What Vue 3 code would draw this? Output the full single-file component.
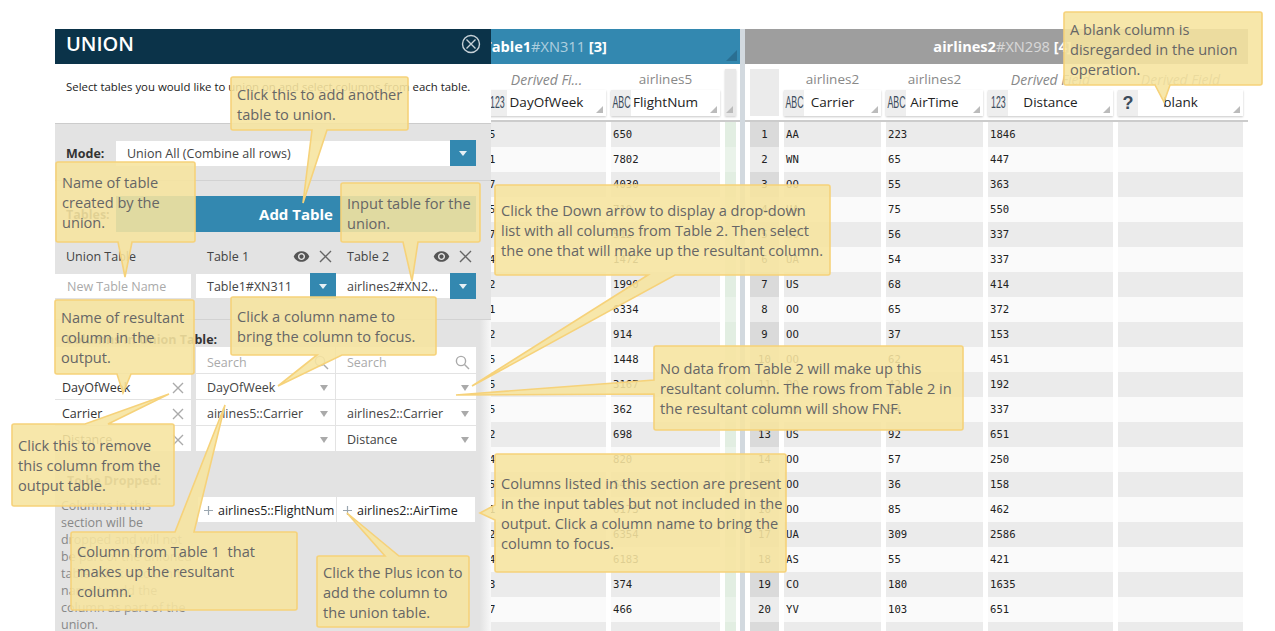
<template>
<div class="page">
    <div class="workspace">
        <section class="table left-table">
            <header class="table-title blue">
                <span class="t-name">Table1</span><span class="t-id">#XN311</span> <span class="t-count">[3]</span>
                <i class="corner"></i>
            </header>
            <div class="columns">
                <div v-for="col in leftCols" :key="col.name" class="col" :class="col.kind">
                    <div class="col-head">
                        <div class="col-source" :class="{ derived: col.derived }">{{ col.source }}</div>
                        <div class="col-name">
                            <span class="type-icon" :class="{ unknown: col.type === '?' }"><b>{{ col.type }}</b></span>
                            <span class="name-text">{{ col.name }}</span>
                            <i class="resize"></i>
                        </div>
                    </div>
                    <div class="cells">
                        <div v-for="(v, i) in col.values" :key="i" class="cell">{{ v }}</div>
                    </div>
                </div>
                <div class="col narrow">
                    <div class="col-head"><i class="resize"></i></div>
                    <div class="cells">
                        <div v-for="n in 21" :key="n" class="cell"></div>
                    </div>
                </div>
            </div>
        </section>

        <div class="split"></div>

        <section class="table right-table">
            <header class="table-title grey">
                <span class="t-name">airlines2</span><span class="t-id">#XN298</span> <span class="t-count">[4]</span>
            </header>
            <div class="columns">
                <div class="col rownum">
                    <div class="col-head"></div>
                    <div class="cells">
                        <div v-for="n in 21" :key="n" class="cell">{{ n < 21 ? n : '' }}</div>
                    </div>
                </div>
                <div v-for="col in rightCols" :key="col.name" class="col" :class="col.kind">
                    <div class="col-head">
                        <div class="col-source" :class="{ derived: col.derived }">{{ col.source }}</div>
                        <div class="col-name">
                            <span class="type-icon" :class="{ unknown: col.type === '?' }"><b>{{ col.type }}</b></span>
                            <span class="name-text">{{ col.name }}</span>
                            <i class="resize"></i>
                        </div>
                    </div>
                    <div class="cells">
                        <div v-for="(v, i) in col.values" :key="i" class="cell">{{ v }}</div>
                    </div>
                </div>
            </div>
        </section>
    </div>

    <aside class="panel">
        <div class="panel-head">
            <h1>UNION</h1>
            <svg class="close" width="20" height="20" viewBox="0 0 20 20">
                <circle cx="10" cy="10" r="8.5" />
                <path d="M5.5 5.5l9 9M14.5 5.5l-9 9" />
            </svg>
        </div>
        <div class="intro">Select tables you would like to union on and select columns from each table.</div>

        <div class="mode-row">
            <label>Mode:</label>
            <div class="select">
                <span>Union All (Combine all rows)</span>
                <button class="drop"><i></i></button>
            </div>
        </div>

        <div class="tables-sec">
            <div class="tables-row">
                <label>Tables:</label>
                <button class="add-table">Add Table</button>
            </div>
            <div class="tgrid heads">
                <div class="c0 th">Union Table</div>
                <div v-for="n in 2" :key="n" class="th">
                    <span>Table {{ n }}</span>
                    <svg class="eye" width="17" height="17" viewBox="0 0 24 24"><path d="M12 4.5C7 4.5 2.73 7.61 1 12c1.73 4.39 6 7.5 11 7.5s9.27-3.11 11-7.5c-1.73-4.39-6-7.5-11-7.5zM12 17c-2.76 0-5-2.24-5-5s2.24-5 5-5 5 2.24 5 5-2.24 5-5 5zm0-8c-1.66 0-3 1.34-3 3s1.34 3 3 3 3-1.34 3-3-1.34-3-3-3z" /></svg>
                    <svg class="x dark" width="13" height="13" viewBox="0 0 13 13"><path d="M1 1l11 11M12 1L1 12" /></svg>
                </div>
            </div>
            <div class="tgrid inputs">
                <div class="c0 input placeholder">New Table Name</div>
                <div class="input-sel"><span>Table1#XN311</span><button class="drop"><i></i></button></div>
                <div class="input-sel"><span>airlines2#XN2...</span><button class="drop"><i></i></button></div>
            </div>
        </div>

        <div class="columns-sec">
            <div class="sec-label">Columns in Union Table:</div>
            <div class="tgrid colgrid">
                <div class="c0 blank-cell"></div>
                <div class="cell-w search"><span>Search</span><svg width="15" height="15" viewBox="0 0 15 15"><circle cx="6" cy="6" r="4.6" /><path d="M9.5 9.5l4.5 4.5" /></svg></div>
                <div class="cell-w search"><span>Search</span><svg width="15" height="15" viewBox="0 0 15 15"><circle cx="6" cy="6" r="4.6" /><path d="M9.5 9.5l4.5 4.5" /></svg></div>
                <template v-for="row in unionRows" :key="row[0]">
                    <div class="c0 cell-w out">
                        <span>{{ row[0] }}</span>
                        <svg class="x" width="12" height="12" viewBox="0 0 12 12"><path d="M1 1l10 10M11 1L1 11" /></svg>
                    </div>
                    <div class="cell-w pick"><span>{{ row[1] }}</span><i></i></div>
                    <div class="cell-w pick"><span>{{ row[2] }}</span><i></i></div>
                </template>
            </div>
        </div>

        <div class="dropped-sec">
            <div class="dropped-text">
                <div class="sec-label">To be Dropped:</div>
                <p>Columns in this<br>section will be<br>dropped and will not<br>be part of the unioned<br>table. Click a column<br>name to add the<br>column as part of the<br>union.</p>
            </div>
            <div class="chips">
                <div v-for="c in droppedCols" :key="c" class="chip">
                    <svg width="11" height="11" viewBox="0 0 11 11"><path d="M5.5 1v9M1 5.5h9" /></svg>
                    <span>{{ c }}</span>
                </div>
            </div>
        </div>
    </aside>

    <div v-for="tip in callouts" :key="tip.id" class="callout" :style="tip.style">
        <svg :width="tip.w" :height="tip.h"><path :d="tip.path" /></svg>
        <p><span v-for="line in tip.lines" :key="line">{{ line }}</span></p>
    </div>
</div>
</template>

<script setup>
const firstVals = [5, 1, 7, 5, 7, 4, 2, 1, 2, 5, 5, 5, 2, 4, 5, 1, 2, 4, 3, 7, '']

const leftCols = [
    { name: 'DayOfWeek', source: 'Derived Fi...', derived: true, type: '123', kind: 'w119', values: firstVals },
    {
        name: 'FlightNum', source: 'airlines5', type: 'ABC', kind: 'w109',
        values: [650, 7802, 4030, 710, 512, 1472, 1990, 6334, 914, 1448, 3167, 362, 698, 820, 547, 6173, 6354, 6183, 374, 466, '']
    }
]

const rightCols = [
    {
        name: 'Carrier', source: 'airlines2', type: 'ABC', kind: 'w97',
        values: ['AA', 'WN', 'OO', 'UA', 'OO', 'UA', 'US', 'OO', 'OO', 'OO', 'OO', 'OO', 'US', 'OO', 'OO', 'OO', 'UA', 'AS', 'CO', 'YV', '']
    },
    {
        name: 'AirTime', source: 'airlines2', type: 'ABC', kind: 'w97',
        values: [223, 65, 55, 75, 56, 54, 68, 65, 37, 62, 42, 54, 92, 57, 36, 85, 309, 55, 180, 103, '']
    },
    {
        name: 'Distance', source: 'Derived Field', derived: true, type: '123', kind: 'w125',
        values: [1846, 447, 363, 550, 337, 337, 414, 372, 153, 451, 192, 337, 651, 250, 158, 462, 2586, 421, 1635, 651, '']
    },
    {
        name: 'blank', source: 'Derived Field', derived: true, type: '?', kind: 'w125',
        values: Array(21).fill('')
    }
]

const unionRows = [
    ['DayOfWeek', 'DayOfWeek', ''],
    ['Carrier', 'airlines5::Carrier', 'airlines2::Carrier'],
    ['Distance', '', 'Distance']
]

const droppedCols = ['airlines5::FlightNum', 'airlines2::AirTime']

// boxes and tail tips are page coordinates read off the screenshot
const rawCallouts = [
    { id: 'remove', box: [11, 423, 175, 507], side: 'top', a: 85, b: 108, tip: [169, 394], lines: ['Click this to remove', 'this column from the', 'output table.'] },
    { id: 'resultant', box: [54, 299, 195, 375], side: 'bottom', a: 117, b: 131, tip: [123, 393], lines: ['Name of resultant', 'column in the', 'output.'] },
    { id: 'name', box: [55, 161, 196, 243], side: 'bottom', a: 118, b: 132, tip: [125, 277], lines: ['Name of table', 'created by the', 'union.'] },
    { id: 'add', box: [230, 76, 409, 131], side: 'bottom', a: 312, b: 327, tip: [303, 203], lines: ['Click this to add another', 'table to union.'] },
    { id: 'input', box: [340, 182, 481, 243], side: 'bottom', a: 403, b: 418, tip: [412, 281], lines: ['Input table for the', 'union.'] },
    { id: 'focus', box: [230, 296, 437, 356], side: 'bottom', a: 317, b: 342, tip: [278, 386], lines: ['Click a column name to', 'bring the column to focus.'] },
    { id: 'down', box: [494, 184, 831, 276], side: 'bottom', a: 648, b: 675, tip: [472, 386], lines: ['Click the Down arrow to display a drop-down', 'list with all columns from Table 2. Then select', 'the one that will make up the resultant column.'] },
    { id: 'nodata', box: [653, 345, 964, 431], side: 'left', a: 380, b: 394, tip: [456, 395], lines: ['No data from Table 2 will make up this', 'resultant column. The rows from Table 2 in', 'the resultant column will show FNF.'] },
    { id: 'from1', box: [70, 531, 298, 611], side: 'top', a: 175, b: 194, tip: [225, 405], lines: ['Column from Table 1  that', 'makes up the resultant', 'column.'] },
    { id: 'listed', box: [494, 453, 787, 573], side: 'left', a: 505, b: 520, tip: [480, 513], lines: ['Columns listed in this section are present', 'in the input tables but not included in the', 'output. Click a column name to bring the', 'column to focus.'] },
    { id: 'plus', box: [316, 555, 470, 628], side: 'top', a: 385, b: 399, tip: [347, 513], lines: ['Click the Plus icon to', 'add the column to', 'the union table.'] },
    { id: 'blank', box: [1063, 11, 1263, 86], side: 'bottom', a: 1155, b: 1170, tip: [1164, 102], lines: ['A blank column is', 'disregarded in the union', 'operation.'] }
]

const calloutPath = (w, h, c) => {
    const [l, t] = c.box
    const r = w - 1
    const b = h - 1
    const tx = c.tip[0] - l
    const ty = c.tip[1] - t
    const top = c.side === 'top' ? `L${c.a - l} 1L${tx} ${ty}L${c.b - l} 1` : ''
    const bottom = c.side === 'bottom' ? `L${c.b - l} ${b}L${tx} ${ty}L${c.a - l} ${b}` : ''
    const left = c.side === 'left' ? `L1 ${c.b - t}L${tx} ${ty}L1 ${c.a - t}` : ''
    return `M3 1${top}L${r - 2} 1Q${r} 1 ${r} 3L${r} ${b - 2}Q${r} ${b} ${r - 2} ${b}${bottom}L3 ${b}Q1 ${b} 1 ${b - 2}${left}L1 3Q1 1 3 1Z`
}

const callouts = rawCallouts.map((c) => {
    const w = c.box[2] - c.box[0]
    const h = c.box[3] - c.box[1]
    return {
        id: c.id,
        lines: c.lines,
        w,
        h,
        path: calloutPath(w, h, c),
        style: { left: `${c.box[0]}px`, top: `${c.box[1]}px`, width: `${w}px`, height: `${h}px` }
    }
})
</script>

<style scoped>
.page {
    position: relative;
    width: 1275px;
    height: 631px;
    overflow: hidden;
    background: #fff;
    font-family: "Open Sans", sans-serif;
    color: #333;
}

.workspace {
    display: flex;
    padding: 29px 0 0 350px;
    height: 602px;
}

.table {
    display: flex;
    flex-direction: column;
    overflow: hidden;
}

.left-table {
    width: 390px;
}

.right-table {
    width: 503px;
}

.split {
    width: 5px;
    background: #d2d9df;
}

.table-title {
    position: relative;
    height: 35px;
    line-height: 35px;
    text-align: center;
    font-size: 14.6px;
    color: #fff;
    flex: none;
}

.table-title.blue {
    background: #3388b0;
}

.table-title.grey {
    padding-left: 12px;
    background: #9e9e9e;
}

.t-name,
.t-count {
    font-weight: 700;
}

.t-id {
    opacity: 0.6;
}

.corner {
    position: absolute;
    right: 3px;
    bottom: 3px;
    border-style: solid;
    border-width: 0 0 11px 11px;
    border-color: transparent transparent #2a6f92 transparent;
}

.columns {
    display: flex;
    gap: 5px;
    flex: 1;
    padding: 0 5px;
    min-height: 0;
    background: linear-gradient(#ccc, #ccc) 0 56px / 100% 2px no-repeat;
}

.left-table .columns {
    justify-content: flex-end;
    padding-right: 4.5px;
}

.col {
    flex: none;
}

.w119 { width: 119px; }
.w109 { width: 109px; }
.w97 { width: 97px; }
.w125 { width: 125px; }

.col-head {
    position: relative;
    height: 58px;
    padding-top: 5px;
    box-sizing: border-box;
}

.col-source {
    height: 21px;
    line-height: 21px;
    font-size: 13.5px;
    text-align: center;
    color: #888;
    background: #fff;
    border-radius: 2px 2px 0 0;
}

.col-source.derived {
    font-size: 14px;
    font-style: italic;
}

.col-name {
    position: relative;
    display: flex;
    align-items: center;
    height: 26px;
    background: #fff;
    box-shadow: 0 1px 2px rgba(0, 0, 0, 0.22);
}

.type-icon {
    display: flex;
    align-items: center;
    justify-content: center;
    flex: none;
    width: 20px;
    height: 26px;
    background: #eee;
    font-family: "Liberation Sans", sans-serif;
    font-size: 16px;
    color: #3c4c5c;
}

.type-icon b {
    font-weight: 400;
    transform: scaleX(0.55);
}

.type-icon.unknown b {
    font-weight: 700;
    font-size: 18px;
    transform: none;
}

.name-text {
    flex: 1;
    padding: 0 20px 2px 0;
    text-align: center;
    font-size: 13.5px;
    color: #222;
    white-space: nowrap;
}

.resize {
    position: absolute;
    right: 3px;
    bottom: 3px;
    border-style: solid;
    border-width: 0 0 7px 7px;
    border-color: transparent transparent #bbb transparent;
}

.cell {
    height: 25px;
    line-height: 25px;
    padding-left: 2px;
    font-family: "DejaVu Sans Mono", monospace;
    font-size: 10.6px;
    color: #222;
    background: #fafafa;
}

.cell:nth-child(odd) {
    background: #ebebeb;
}

.narrow {
    width: 10.5px;
}

.narrow .col-head {
    height: 47px;
    margin: 5px 0 6px;
    padding: 0;
    background: #e8e8e8;
    box-shadow: 0 1px 2px rgba(0, 0, 0, 0.2);
}

.narrow .cell {
    background: #eaf3ea;
}

.narrow .cell:nth-child(odd) {
    background: #e2eee2;
}

.rownum {
    width: 29px;
}

.rownum .col-head {
    height: 47px;
    margin: 5px 0 6px;
    padding: 0;
    background: #ebebeb;
}

.rownum .cell {
    padding: 0;
    text-align: center;
    background: #ececec;
}

.rownum .cell:nth-child(odd) {
    background: #dadada;
}

.panel {
    position: absolute;
    left: 55px;
    top: 29px;
    bottom: 0;
    width: 436px;
    display: flex;
    flex-direction: column;
    background: #e3e3e3;
    font-size: 12.5px;
}

.panel > * {
    flex: none;
}

.panel-head {
    display: flex;
    justify-content: space-between;
    align-items: center;
    height: 35px;
    padding: 0 10px 5px 11px;
    box-sizing: border-box;
    background: #0b3349;
}

.panel-head h1 {
    margin: 0;
    font-size: 20px;
    font-weight: 600;
    line-height: 26px;
    color: #fff;
}

.close {
    fill: none;
    stroke: #c8d2d8;
    stroke-width: 1.4;
}

.intro {
    height: 60px;
    padding: 15px 11px 0;
    box-sizing: border-box;
    background: #fff;
    border-bottom: 1px solid #ccc;
    font-size: 11.4px;
    line-height: 16px;
    color: #222;
    white-space: nowrap;
}

.mode-row {
    display: flex;
    align-items: center;
    height: 57px;
    padding: 2px 15px 0 11px;
    box-sizing: border-box;
    border-bottom: 1px solid #d2d2d2;
}

.mode-row label,
.tables-row label {
    width: 50px;
    flex: none;
    font-size: 12.5px;
    font-weight: 700;
    color: #333;
}

.select {
    flex: 1;
    display: flex;
    align-items: center;
    justify-content: space-between;
    height: 25px;
    padding-left: 11px;
    background: #fff;
    font-size: 12.5px;
    color: #444;
}

.drop {
    flex: none;
    display: flex;
    align-items: center;
    justify-content: center;
    width: 26px;
    height: 26px;
    padding: 0;
    border: none;
    background: #3388b0;
}

.drop i {
    border-style: solid;
    border-width: 5px 4.5px 0;
    border-color: #e6f0f5 transparent transparent;
}

.tables-sec {
    height: 139px;
    padding-top: 15px;
    box-sizing: border-box;
    border-bottom: 1px solid #d2d2d2;
}

.tables-row {
    display: flex;
    align-items: center;
    padding: 0 15px 0 11px;
}

.add-table {
    flex: 1;
    height: 36px;
    border: none;
    background: #3388b0;
    color: #fff;
    font-family: inherit;
    font-size: 15px;
    font-weight: 700;
}

.tgrid {
    display: grid;
    grid-template-columns: 141px 140px 140px;
}

.c0 {
    margin-right: 5px;
}

.heads {
    height: 41px;
    align-items: center;
    padding-top: 8px;
    box-sizing: border-box;
}

.th {
    display: flex;
    align-items: center;
    padding: 0 4px 0 11px;
    font-size: 12.5px;
    color: #444;
}

.th span {
    flex: 1;
}

.eye {
    fill: #555;
    margin-right: 9px;
}

.x {
    fill: none;
    stroke: #aaa;
    stroke-width: 1.4;
    flex: none;
}

.x.dark {
    stroke: #666;
}

.inputs {
    align-items: center;
    height: 26px;
}

.input {
    height: 24px;
    line-height: 26px;
    padding-left: 12px;
    background: #fff;
    font-size: 12.5px;
}

.placeholder {
    color: #aaa;
}

.input-sel {
    display: flex;
    align-items: center;
    justify-content: space-between;
    height: 24px;
    padding-left: 11px;
    background: #fff;
    font-size: 12.5px;
    color: #444;
}

.input-sel span {
    padding-top: 1px;
}

.columns-sec {
    height: 132px;
    padding-top: 13px;
    box-sizing: border-box;
    background: linear-gradient(to right, #e3e3e3 425px, #f8f8f8);
}

.sec-label {
    padding-left: 11px;
    height: 14px;
    line-height: 14px;
    font-size: 12.5px;
    font-weight: 700;
    color: #333;
}

.colgrid {
    grid-template-rows: 26px;
    grid-auto-rows: 25px;
    row-gap: 1px;
    width: 421px;
}

.blank-cell {
    background: #fff;
}

.cell-w {
    display: flex;
    align-items: center;
    justify-content: space-between;
    padding: 2px 6px 0 11px;
    background: #fff;
    border-right: 1px solid #e3e3e3;
    font-size: 12.5px;
    color: #444;
    box-sizing: border-box;
}

.cell-w:nth-child(3n) {
    border-right: none;
}

.search {
    padding-top: 4px;
    color: #aaa;
}

.search svg {
    fill: none;
    stroke: #aaa;
    stroke-width: 1.4;
}

.out {
    padding: 2px 7px 0;
    border-right: none;
    color: #333;
}

.pick i {
    border-style: solid;
    border-width: 6px 4px 0;
    border-color: #aaa transparent transparent;
    margin-right: 1px;
}

.dropped-sec {
    flex: 1 1 0;
    min-height: 0;
    display: flex;
    padding: 22px 0 0 6px;
    background: linear-gradient(to right, #e3e3e3 425px, #f8f8f8);
}

.dropped-text {
    width: 137px;
    flex: none;
}

.dropped-text .sec-label {
    padding-left: 6px;
    margin-bottom: 9px;
    color: #555;
}

.dropped-text p {
    margin: 0;
    font-size: 12.5px;
    line-height: 17px;
    color: #888;
    white-space: nowrap;
}

.chips {
    display: flex;
    gap: 1px;
    margin-top: 23px;
    height: 25px;
}

.chip {
    display: flex;
    align-items: center;
    gap: 4px;
    width: 138px;
    padding: 1px 0 0 5px;
    box-sizing: border-box;
    background: #fff;
    font-size: 12.5px;
    color: #222;
    white-space: nowrap;
}

.chip svg {
    fill: none;
    stroke: #9aa6b0;
    stroke-width: 1.2;
    flex: none;
}

.callout {
    position: absolute;
    display: flex;
    align-items: center;
}

.callout svg {
    position: absolute;
    left: 0;
    top: 0;
    overflow: visible;
}

.callout path {
    fill: rgba(246, 228, 160, 0.89);
    stroke: #f6d27a;
    stroke-width: 1.6;
}

.callout p {
    position: relative;
    margin: 0;
    padding: 0 0 0 7px;
    font-size: 14.6px;
    line-height: 20px;
    color: #666;
    white-space: pre;
}

.callout p span {
    display: block;
}
</style>

<style>
html, body {
    margin: 0;
    overflow: hidden;
}
</style>
